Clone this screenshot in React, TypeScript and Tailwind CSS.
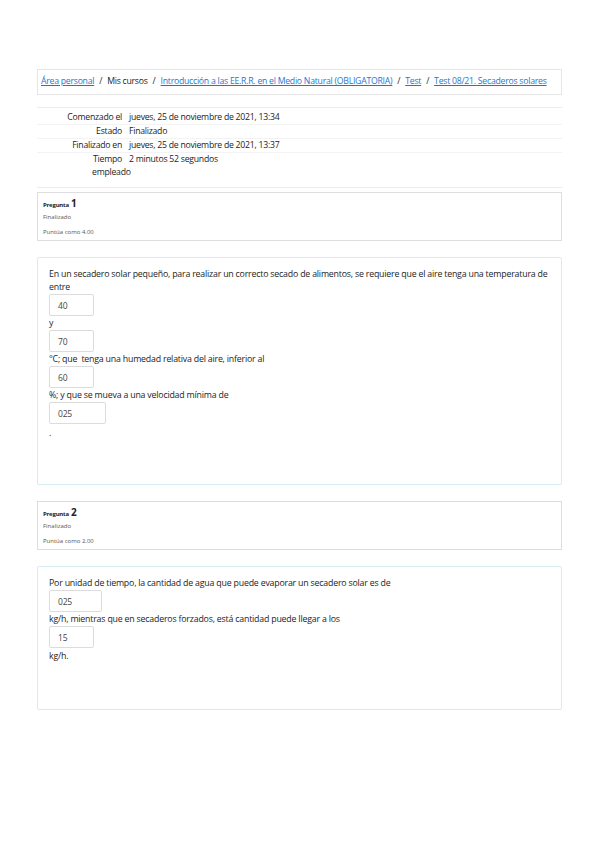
const font = { fontFamily: '"Open Sans", "Liberation Sans", sans-serif' };

function Input({ value, w }: { value: string; w: string }) {
  return (
    <div className={`${w} flex h-[22px] items-center rounded-[2px] border border-[#dcdcdc] bg-white pl-[8px] text-[8.5px] text-[#444]`}>
      {value}
    </div>
  );
}

function Info({ n, score, top }: { n: string; score: string; top: string }) {
  return (
    <div className={`${top} h-[49px] border border-[#dedede] px-[5px] pt-[4px]`}>
      <div className="flex items-baseline gap-[2px] text-[#222]">
        <span className="text-[6px] font-bold tracking-[-0.2px]">Pregunta</span>
        <span className="text-[10px] font-bold leading-[12px]">{n}</span>
      </div>
      <div className="mt-[3px] text-[6px] leading-[8px] text-[#555]">Finalizado</div>
      <div className="mt-[7px] text-[6px] leading-[8px] text-[#555]">Puntúa como {score}</div>
    </div>
  );
}

export default function App() {
  const rows = [
    ["Comenzado el", "jueves, 25 de noviembre de 2021, 13:34"],
    ["Estado", "Finalizado"],
    ["Finalizado en", "jueves, 25 de noviembre de 2021, 13:37"],
    ["Tiempo empleado", "2 minutos 52 segundos"],
  ];
  return (
    <div className="min-h-[848px] w-[599px] bg-white px-[37px] pt-[69px] text-[#1d1d1d]" style={font}>
      <div className="flex h-[26px] items-center whitespace-nowrap border border-[#e6e6e6] pl-[3px] text-[8.7px] tracking-[-0.25px]">
        <a className="text-[#1e78d0] underline">Área personal</a>
        <span className="mx-[5px]">/</span>
        <span>Mis cursos</span>
        <span className="mx-[5px]">/</span>
        <a className="text-[#1e78d0] underline">Introducción a las EE.R.R. en el Medio Natural (OBLIGATORIA)</a>
        <span className="mx-[5px]">/</span>
        <a className="text-[#1e78d0] underline">Test</a>
        <span className="mx-[5px]">/</span>
        <a className="text-[#1e78d0] underline">Test 08/21. Secaderos solares</a>
      </div>

      <div className="mt-[12px] border-t border-b border-[#ececec] pt-[3px] pb-[8px] text-[8.7px] tracking-[-0.25px]">
        {rows.map(([k, v], i) => (
          <div key={k} className={`flex ${i > 0 ? "border-t border-[#f3f3f3]" : ""} leading-[13px]`}>
            <div className={`w-[92px] shrink-0 pr-[7px] text-right ${i === 3 ? "pl-[55px]" : ""}`}>{k}</div>
            <div>{v}</div>
          </div>
        ))}
      </div>

      <Info n="1" score="4.00" top="mt-[4px]" />

      <div className="mt-[16px] h-[228px] rounded-[2px] border border-[#d6eef2] px-[11px] pt-[10px] text-[8.8px] leading-[13px] tracking-[-0.2px]">
        <div>En un secadero solar pequeño, para realizar un correcto secado de alimentos, se requiere que el aire tenga una temperatura de entre</div>
        <Input value="40" w="w-[45px]" />
        <div className="mt-[1px]">y</div>
        <Input value="70" w="w-[45px]" />
        <div className="mt-[1px]">°C; que&nbsp; tenga una humedad relativa del aire, inferior al</div>
        <Input value="60" w="w-[45px]" />
        <div className="mt-[1px]">%; y que se mueva a una velocidad mínima de</div>
        <Input value="025" w="w-[57px]" />
        <div className="mt-[3px]">.</div>
      </div>

      <Info n="2" score="2.00" top="mt-[16px]" />

      <div className="mt-[16px] h-[144px] rounded-[2px] border border-[#d6eef2] px-[11px] pt-[10px] text-[8.8px] leading-[13px] tracking-[-0.2px]">
        <div>Por unidad de tiempo, la cantidad de agua que puede evaporar un secadero solar es de</div>
        <Input value="025" w="w-[53px]" />
        <div className="mt-[1px]">kg/h, mientras que en secaderos forzados, está cantidad puede llegar a los</div>
        <Input value="15" w="w-[45px]" />
        <div className="mt-[2px]">kg/h.</div>
      </div>
    </div>
  );
}
